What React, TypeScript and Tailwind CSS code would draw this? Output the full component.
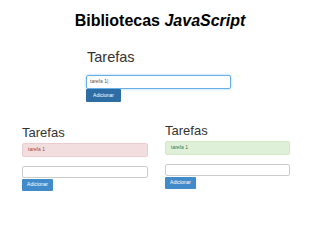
const font = { fontFamily: '"Liberation Sans", Arial, sans-serif' }

interface ListaProps {
  tarefa: string
  tipo: 'erro' | 'ok'
  width: string
}

const Lista: React.FC<ListaProps> = ({ tarefa, tipo }) => {
  const caixa =
    tipo === 'erro'
      ? 'bg-[#f2dede] border-[#ebccd1] text-[#a94442]'
      : 'bg-[#dff0d8] border-[#d6e9c6] text-[#3c763d]'
  return (
    <div className="flex flex-col">
      <h2 className="text-[13px] leading-[13px] text-[#333]">Tarefas</h2>
      <div className={`mt-[4px] h-[14px] flex items-center pl-[5px] border rounded-[2px] text-[5px] ${caixa}`}>
        {tarefa}
      </div>
      <div className="mt-[9px] h-[12px] border border-[#ccc] rounded-[2px] bg-white"></div>
      <button className="mt-px h-[12px] w-[31px] bg-[#428bca] text-white text-[5px] rounded-[1px] flex items-center justify-center">
        Adicionar
      </button>
    </div>
  )
}

export default function App() {
  return (
    <div className="w-[320px] h-[240px] bg-white overflow-hidden flex flex-col" style={font}>
      {/* title */}
      <h1 className="mt-[13px] text-[16px] leading-[16px] font-bold text-black text-center">
        Bibliotecas <i>JavaScript</i>
      </h1>

      {/* formulario de cima */}
      <div className="ml-[86px] mt-[21px] flex flex-col w-[145px]">
        <h2 className="text-[14.5px] leading-[15px] text-[#333] pl-px">Tarefas</h2>
        <div className="mt-[10px] h-[14px] border border-[#66afe9] rounded-[2px] shadow-[0_0_3px_rgba(102,175,233,0.6)] flex items-center pl-[3px] text-[5px] text-[#555]">
          tarefa 1|
        </div>
        <button className="h-[13px] w-[35px] bg-[#2e6da4] text-white text-[5px] rounded-[1px] flex items-center justify-center">
          Adicionar
        </button>
      </div>

      {/* resultados */}
      <div className="flex items-start">
        <div className="ml-[22px] mt-[24px] w-[126px]">
          <Lista tarefa="tarefa 1" tipo="erro" width="126px" />
        </div>
        <div className="ml-[17px] mt-[22px] w-[125px]">
          <Lista tarefa="tarefa 1" tipo="ok" width="125px" />
        </div>
      </div>
    </div>
  )
}
